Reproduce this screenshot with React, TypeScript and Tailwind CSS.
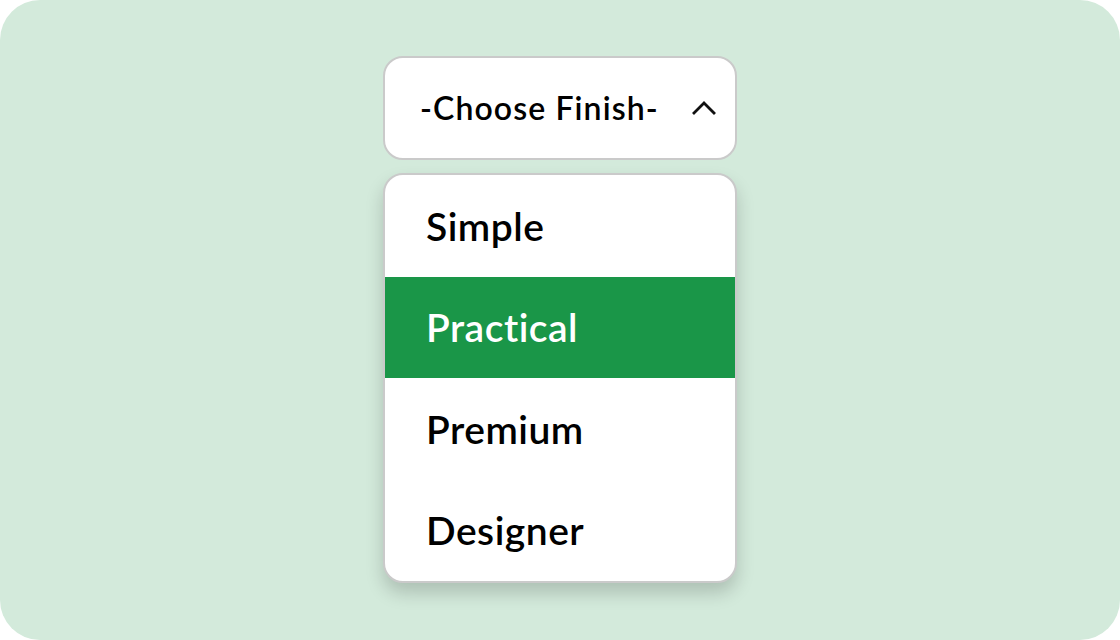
import React from "react";

export default function App() {
  const items = ["Simple", "Practical", "Premium", "Designer"];
  return (
    <div className="w-[1120px] h-[640px] bg-white">
      <div
        className="w-full h-full rounded-[40px] bg-[#d3eadb] flex flex-col items-center pt-[56px] [font-variant-ligatures:none]"
        style={{ fontFamily: "Lato, 'Noto Sans', sans-serif" }}
      >
        <div className="w-[354px] h-[104px] bg-white border-2 border-[#cacaca] rounded-[20px] flex items-center justify-between pl-[35px] pr-[18px]">
          <span className="text-[32px] font-semibold text-black tracking-[1.1px]">-Choose Finish-</span>
          <svg width="26" height="16" viewBox="0 0 26 16" fill="none">
            <path d="M3 13 L13 3 L23 13" stroke="#111" strokeWidth="2.8" strokeLinecap="square" />
          </svg>
        </div>
        <div className="mt-[13px] w-[354px] bg-white border-2 border-[#cacaca] rounded-[20px] overflow-hidden shadow-[0_10px_18px_rgba(0,0,0,0.18)]">
          {items.map((it) => (
            <div
              key={it}
              className={
                it === "Practical"
                  ? "h-[101.5px] flex items-center pl-[41px] bg-[#1a9648] text-white text-[39px] font-semibold tracking-[0.5px]"
                  : "h-[101.5px] flex items-center pl-[41px] text-black text-[39px] font-semibold tracking-[0.5px]"
              }
            >
              {it}
            </div>
          ))}
        </div>
      </div>
    </div>
  );
}
